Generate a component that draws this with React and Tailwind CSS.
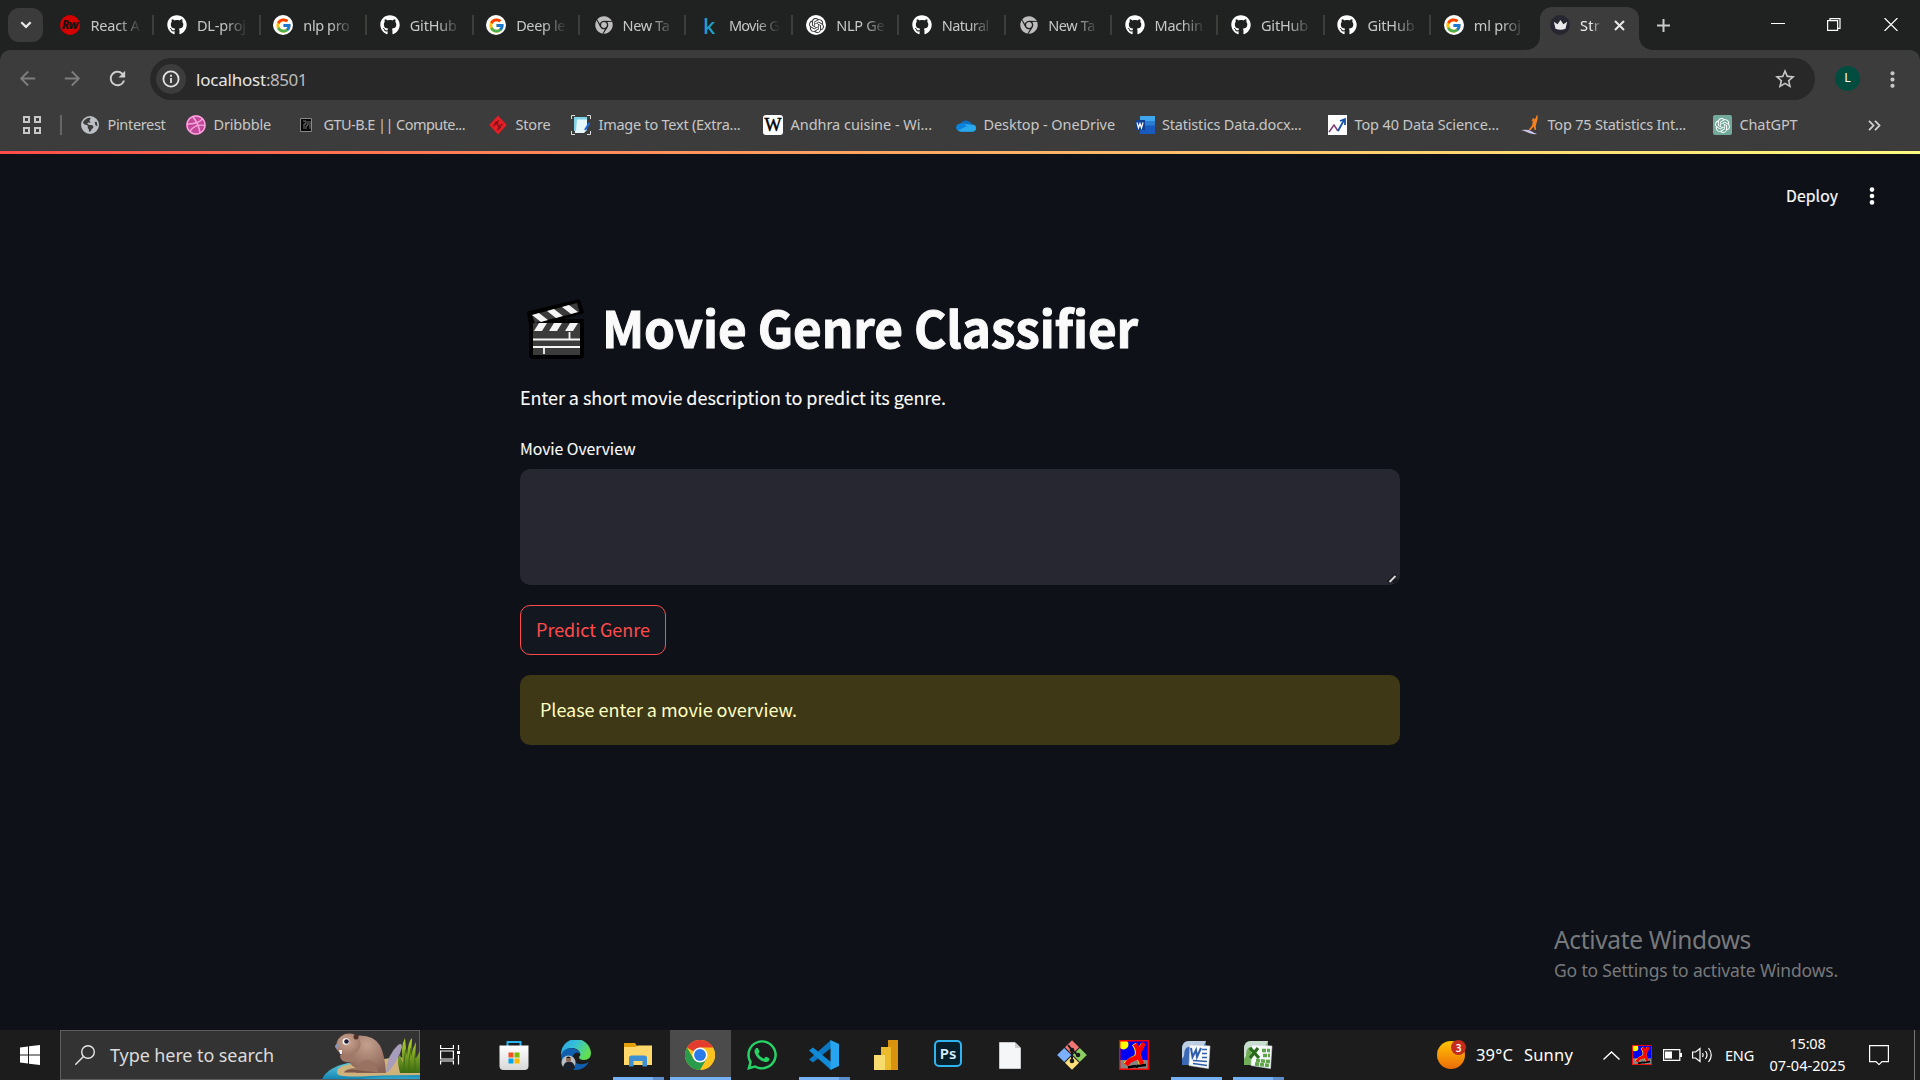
import React, { useLayoutEffect, useRef, useState } from "react";
import { FaGithub, FaChrome, FaDribbble, FaWhatsapp } from "react-icons/fa";
import { FaEarthAmericas } from "react-icons/fa6";
import { FcGoogle } from "react-icons/fc";
import { SiOpenai } from "react-icons/si";
import { MdArrowBack, MdArrowForward, MdRefresh, MdStarBorder, MdMoreVert } from "react-icons/md";

/* Single line of text whose letter spacing is adjusted to fill a given width. */
function Fit({ w, className = "", children }) {
  const ref = useRef(null);
  const [ls, setLs] = useState(0);
  useLayoutEffect(() => {
    const natural = ref.current.getBoundingClientRect().width;
    setLs((w - natural) / children.length);
  }, []);
  return (
    <span ref={ref} className={`inline-block shrink-0 whitespace-pre ${className}`} style={{ letterSpacing: `${ls}px` }}>
      {children}
    </span>
  );
}

const Google = () => (
  <span className="flex size-5 items-center justify-center rounded-full bg-white"><FcGoogle size={17} /></span>
);
const Github = () => <FaGithub size={20} color="#fff" />;
const Chrome = () => <span className="flex size-5 items-center justify-center pl-[2px]"><FaChrome size={18} color="#bdbdbd" /></span>;
const ReactW = () => (
  <span className="-ml-px mr-px flex size-5 items-center justify-center rounded-full bg-[#d40000] text-[12px] font-black italic leading-none tracking-[-1px] text-[#251010]">Rw</span>
);
const Kaggle = () => <span className="w-5 pl-[4px] text-[22px] font-medium leading-[20px] text-[#1f9fd0]">k</span>;
const Openai = () => (
  <span className="ml-px flex size-5 items-center justify-center rounded-full bg-white"><SiOpenai size={15} color="#333" /></span>
);

const TABS = [
  [ReactW, "React A", 49], [Github, "DL-proj", 49], [Google, "nlp pro", 46], [Github, "GitHub", 47],
  [Google, "Deep le", 49], [Chrome, "New Ta", 47], [Kaggle, "Movie G", 50], [Openai, "NLP Ge", 48],
  [Github, "Natural", 47], [Chrome, "New Ta", 47], [Github, "Machin", 48], [Github, "GitHub", 47],
  [Github, "GitHub", 47], [Google, "ml proj", 47],
];

function TabStrip() {
  return (
    <div className="flex h-[50px] bg-[#1f2220] text-[#c7c7c7]">
      <div className="ml-2 mt-2 flex h-[34px] w-[35px] items-center justify-center rounded-[11px] bg-[#3a3b3a]">
        <svg width="12" height="8" viewBox="0 0 12 8" fill="none" stroke="#e8e8e8" strokeWidth="2.2"><path d="M1.3 1.2 6 5.9l4.7-4.7" /></svg>
      </div>
      <div className="ml-[5px] flex w-[1488px] shrink-0">
        {TABS.map(([Icon, text, w], i) => (
          <div key={i} className="flex h-[50px] w-[106.42px] shrink-0 items-center pl-[12.5px]">
            <Icon />
            <div className="ml-[10px] w-[50px] overflow-hidden text-[14.500px] leading-[24px] [mask-image:linear-gradient(90deg,#000_55%,transparent_102%)]">
              <Fit w={w}>{text}</Fit>
            </div>
            <div className={i === 13 ? "" : "ml-auto h-5 w-[2px] bg-[#3c3e3c]"} />
          </div>
        ))}
      </div>
      <div className="-ml-[11px] flex w-[132px] shrink-0 items-end">
        <svg className="shrink-0" width="15" height="14" viewBox="0 0 15 14"><path d="M15 0v14H0C9 14 15 8 15 0Z" fill="#3c3c3c" /></svg>
        <div className="flex h-[43px] w-[99px] shrink-0 items-center rounded-t-[12px] bg-[#3c3c3c] pb-[7px] pl-[10px]">
          <span className="flex size-5 items-center justify-center rounded-full bg-[#262730]">
            <svg width="15" height="10" viewBox="0 0 16 12"><path d="M0 2l4.5 3L8 0l3.500 5L16 2l-2 8.500q-6 2.500-12 0Z" fill="#e9e9ec" /></svg>
          </span>
          <div className="ml-[10px] w-[21px] overflow-hidden text-[14.500px] leading-[24px] text-[#eee] [mask-image:linear-gradient(90deg,#000_50%,transparent_102%)]"><Fit w={20}>Str</Fit></div>
          <svg className="ml-[13px]" width="11" height="11" viewBox="0 0 11 11" stroke="#e8e8e8" strokeWidth="2"><path d="M1 1l9 9M10 1l-9 9" /></svg>
        </div>
        <svg className="shrink-0" width="15" height="14" viewBox="0 0 15 14"><path d="M0 0v14h15C6 14 0 8 0 0Z" fill="#3c3c3c" /></svg>
      </div>
      <svg className="mt-[18.500px]" width="13" height="13" viewBox="0 0 13 13" stroke="#c9c9c9" strokeWidth="2"><path d="M6.500 0v13M0 6.500h13" /></svg>
      <div className="ml-auto mr-[22px] mt-[18px] flex h-[13px]">
        <svg width="14" height="13" stroke="#fff"><path d="M0 5.500h14" /></svg>
        <svg className="ml-[42px]" width="14" height="13" fill="none" stroke="#fff" strokeWidth="1.200"><path d="M.6 2.600h10v9.800H.6ZM3 2.500V.6h10v9.800h-2.300" /></svg>
        <svg className="ml-[43px]" width="14" height="13" stroke="#fff" strokeWidth="1.200"><path d="M.5 0l13 13M13.500 0l-13 13" /></svg>
      </div>
    </div>
  );
}

function Toolbar() {
  return (
    <div className="bg-[#1f2220]">
      <div className="flex h-[50px] items-start rounded-t-[10px] bg-[#3c3c3c] pt-2">
        <div className="flex h-[42px] w-[150px] items-center pb-[1px]">
          <MdArrowBack className="ml-[16px]" size={23} color="#7d7d7d" />
          <MdArrowForward className="ml-[22px]" size={23} color="#7d7d7d" />
          <MdRefresh className="ml-[22px]" size={23} color="#cfcfcf" />
        </div>
        <div className="flex h-[42px] w-[1665px] items-center rounded-full bg-[#282828]">
          <span className="ml-[6px] flex size-[30px] items-center justify-center rounded-full bg-[#3c3c3c]">
            <svg width="18" height="18" viewBox="0 0 18 18" fill="none" stroke="#e3e3e3" strokeWidth="1.800"><circle cx="9" cy="9" r="7.600" /><path d="M9 8v5M9 4.800v1.900" /></svg>
          </span>
          <div className="ml-[10px] mt-px flex text-[17px] leading-[42px] text-[#e6e6e6]"><Fit w={70}>localhost</Fit><Fit w={41} className="text-[#bdbdbd]">:8501</Fit></div>
          <MdStarBorder className="ml-auto mr-[18px]" size={24} color="#c7c7c7" />
        </div>
        <div className="ml-5 mt-2 flex size-[25px] items-center justify-center rounded-full bg-[#004d40] text-[12.500px] text-white">L</div>
        <MdMoreVert className="ml-[20px] mt-[8.500px]" size={25} color="#c7c7c7" />
      </div>
    </div>
  );
}

const BM = [
  ["w-[106px]", "Pinterest", 58, <FaEarthAmericas size={18} color="#bcc0c4" />],
  ["w-[110px]", "Dribbble", 57.5, <span className="flex size-5 items-center justify-center rounded-full bg-[#c2489a]"><FaDribbble size={20} color="#f7a6dc" /></span>],
  ["w-[192px]", "GTU-B.E || Compute...", 141.5, <svg width="12" height="14"><path d="M.5.500h11v13H.5Z" fill="#050505" stroke="#888" /><path d="M3 3h3v3H4v5M8 3v4l-2 1v3M10 3v8" stroke="#777" fill="none" /></svg>],
  ["w-[83px]", "Store", 35, <svg width="20" height="20" viewBox="0 0 20 20"><path d="M10 .5 18.800 10 10 19.500 1.200 10Z" fill="#e41e26" /><path d="M6.500 8.500 11 5.500M5 11l4.500-3 1 4 4-3M9 15l4-3" stroke="#7c1216" strokeWidth="1.200" fill="none" /></svg>],
  ["w-[192px]", "Image to Text (Extra...", 142, <svg width="20" height="20" viewBox="0 0 20 20"><path d="M.5 4V.5H4M16 .5h3.500V4M.5 16v3.500H4M16 19.500h3.500V16" stroke="#ddd" fill="none" /><path d="M3 3h13v12l-3 3H4Z" fill="#e6f7fb" /><path d="M3 2h13v2.500H6L5 16H3Z" fill="#7fd3e6" /><path d="M18.500 8 14 15" stroke="#2367d8" strokeWidth="2.200" /></svg>],
  ["w-[193px]", "Andhra cuisine - Wi...", 141.5, <span className="flex size-5 items-center justify-center overflow-hidden rounded-[3px] bg-white font-['Liberation_Serif',serif] text-[18px] leading-none text-black"><span className="[-webkit-text-stroke:0.5px_#000]">W</span></span>],
  ["w-[178.5px]", "Desktop - OneDrive", 131.5, <svg width="20" height="13" viewBox="0 0 20 13"><path d="M5 12.500a4.500 4.500 0 0 1-.5-8A6.500 6.500 0 0 1 16 5.500q4 .8 4 4t-3 3Z" fill="#0f6cbd" /><path d="M7 4.500 18.500 6q2 1.500 1.500 4-.8 2.800-3.500 2.800H4.500q-2.500-.3-3.500-2.800L9 6Z" fill="#28a8ea" /><path d="M0 9q0-4 4.500-4.600Q8 4 11 7L2 11.500Q.4 10.500 0 9Z" fill="#0a84dc" /></svg>],
  ["w-[192.5px]", "Statistics Data.docx...", 139.5, <svg width="20" height="18" viewBox="0 0 20 18"><path d="M5 0h15v18H5Z" fill="#185abd" /><path d="M5 0h15v5H5Z" fill="#41a5ee" /><path d="M5 5h15v4.500H5Z" fill="#2b7cd3" /><path d="M0 4h10v10H0Z" fill="#123f92" /><path d="M2 6.500 3.500 12 5 7.500 6.500 12 8 6.500" stroke="#fff" strokeWidth="1.200" fill="none" /></svg>],
  ["w-[193px]", "Top 40 Data Science...", 144.5, <svg width="19" height="20" viewBox="0 0 19 20"><path d="M0 0h19v20H0Z" fill="#fff" /><path d="M1 17 6 10l4 6" stroke="#7b3b76" strokeWidth="1.500" fill="none" /><path d="M10 16 16 5M12 6l5-2v6" stroke="#1753a6" strokeWidth="1.800" fill="none" /></svg>],
  ["w-[192px]", "Top 75 Statistics Int...", 138.5, <svg width="20" height="20" viewBox="0 0 20 20"><path d="M16.500.5h1.200q.3 4-1 7l-1 3 .3 4.500h-1.300l-1-3.500-3 3.500H8.500l3.500-4.500.8-4-1.800-1.500 3 .5q2-2 2.500-5Z" fill="#f58220" /><circle cx="13.500" cy="4.500" r="1.200" fill="#f58220" /><path d="M1 15q7-1 10 1t6 3q-5 .5-8-1t-8-3Z" fill="#cbc4e8" /></svg>],
  ["w-[100px]", "ChatGPT", 58, <span className="flex h-5 w-[19px] items-center justify-center rounded-[2px] bg-[#74aa9c]"><SiOpenai size={15} color="#fff" /></span>],
];

function Bookmarks() {
  return (
    <div className="flex h-[51px] items-start bg-[#3c3c3c] pt-[9px] text-[14.500px] text-[#c7c7c7]">
      <div className="flex h-8 w-20 shrink-0 items-center">
        <svg className="ml-[23px]" width="18" height="18" fill="none" stroke="#c7c7c7" strokeWidth="2"><path d="M1 1h5v5H1ZM12 1h5v5h-5ZM1 12h5v5H1ZM12 12h5v5h-5Z" /></svg>
        <div className="ml-[19px] h-5 w-[2px] bg-[#666]" />
      </div>
      {BM.map(([cls, text, w, icon], i) => (
        <div key={i} className={`flex h-8 shrink-0 items-center ${cls}`}>
          <span className="mr-[7.500px] flex w-5 shrink-0 items-center justify-center">{icon}</span>
          <Fit w={w} className="pb-[2px] leading-[30px]">{text}</Fit>
        </div>
      ))}
      <svg className="ml-auto mr-[39px] mt-[11px]" width="13" height="11" fill="none" stroke="#d0d0d0" strokeWidth="1.800"><path d="M1 .8 5.500 5.500 1 10.200M7 .8l4.500 4.700L7 10.200" /></svg>
    </div>
  );
}

function Clapper() {
  return (
    <svg width="58" height="61" viewBox="0 0 58 61">
      <path d="M0 14Q0 12 2 12L51 .5q2-.5 2.500 1.500l3.500 12L37 20h18q2 0 2 2v33q0 5-5 5H7q-5 0-5-5V25Z" fill="#000" />
      <path d="M5 16 50 4l2.500 9L8 24Z" fill="#3b3b3b" />
      <path d="M5 16l7-2 9 7-7 2ZM20 12l7-2 9 7-7 2ZM35 8l7-2 9 7-7 2Z" fill="#f4f4f4" />
      <path d="M6 24h47v32H6Z" fill="#3b3b3b" />
      <path d="M12 24h8l-5 8H7ZM27 24h8l-5 8h-8ZM43 24h8l-5 8h-8Z" fill="#f4f4f4" />
      <path d="M6 40.500h47M6 48h47M42.500 33v7M17 48v7" stroke="#f4f4f4" strokeWidth="1.800" />
    </svg>
  );
}

function StreamlitPage() {
  return (
    <div className="flex h-[876px] flex-col bg-[#0e1117] font-['Noto_Sans_CJK_SC',sans-serif] text-[#fafafa]">
      <div className="flex h-[75px] items-center pl-[1786px] pt-[9px]">
        <Fit w={52} className="text-[15.750px] leading-6 [-webkit-text-stroke:0.2px_#fafafa]">Deploy</Fit>
        <svg className="ml-[31px]" width="6" height="18" fill="#fafafa"><circle cx="3" cy="2.600" r="2.300" /><circle cx="3" cy="9" r="2.300" /><circle cx="3" cy="15.400" r="2.300" /></svg>
      </div>
      <div className="mx-auto flex w-[880px] flex-col pt-[70px]">
        <div className="flex h-[62px] pl-[7px]">
          <Clapper />
          <Fit w={536} className="ml-[17px] text-[49.500px] font-bold leading-[56px] [-webkit-text-stroke:1px_#fafafa]">Movie Genre Classifier</Fit>
        </div>
        <div className="mt-[24px] h-6 text-[18px] leading-6 [-webkit-text-stroke:0.1px_#fafafa]"><Fit w={426}>Enter a short movie description to predict its genre.</Fit></div>
        <div className="mt-[30px] h-5 text-[15.750px] leading-5 [-webkit-text-stroke:0.1px_#fafafa]"><Fit w={115.5}>Movie Overview</Fit></div>
        <div className="mt-[10px] flex h-[116px] items-end justify-end rounded-[10px] bg-[#262730] p-[1px] pr-[2px]">
          <svg width="11" height="11" viewBox="0 0 11 11" fill="none"><path d="M1.500 9.500 9 2M6 9.500 9.500 6" stroke="#15161c" strokeWidth="3.500" /><path d="M2.500 9 8.500 3" stroke="#d8d8d8" strokeWidth="2" /></svg>
        </div>
        <div className="mt-5 flex h-[50px] w-[146px] items-center rounded-[10px] border border-[#ff4b4b] bg-[#131720] pb-[3px] pl-[15px] text-[18px] text-[#ff4b4b]">
          <Fit w={114} className="leading-6">Predict Genre</Fit>
        </div>
        <div className="mt-5 flex h-[70px] items-center rounded-[10px] bg-[#3e3816] pb-[3px] pl-5 text-[18px] text-[#ffffc2]">
          <Fit w={257} className="leading-6">Please enter a movie overview.</Fit>
        </div>
      </div>
      <div className="ml-[1554px] mt-auto h-[107px] font-['Noto_Sans',sans-serif] text-[#77797c]">
        <Fit w={197} className="block text-[24.500px] leading-[34px]">Activate Windows</Fit>
        <Fit w={284} className="block text-[17.500px] leading-[26px]">Go to Settings to activate Windows.</Fit>
      </div>
    </div>
  );
}

const Beaver = () => (
  <svg width="98" height="48" viewBox="0 0 98 48">
    <defs>
      <radialGradient id="fur" cx=".5" cy=".25" r=".75"><stop offset="0" stopColor="#c4a08e" /><stop offset="1" stopColor="#8b6456" /></radialGradient>
      <radialGradient id="face" cx=".45" cy=".4" r=".65"><stop offset="0" stopColor="#cda793" /><stop offset="1" stopColor="#9c7363" /></radialGradient>
      <linearGradient id="water" x1="0" y1="0" x2="0" y2="1"><stop offset="0" stopColor="#5fc8dc" /><stop offset="1" stopColor="#1286b4" /></linearGradient>
      <linearGradient id="grass" x1="0" y1="0" x2="0" y2="1"><stop offset="0" stopColor="#b7d433" /><stop offset="1" stopColor="#3c6b12" /></linearGradient>
    </defs>
    <path d="M0 48Q6 36 26 32L98 36v12Z" fill="url(#water)" />
    <path d="M15 42q-1-8 18-9l35-6q20-2 30 1v16q-28 0-50 1-33 2-33-3Z" fill="#d0b37c" />
    <path d="M40 48q24-4 58-2v2Z" fill="#2b9fc4" />
    <path d="M64 41q1-17 12-27 4-3 4 2-3 13-14 25Z" fill="#a79dbb" />
    <path d="M26 24Q24 6 38 4.500q14 0 20 10 5 10 6 27.500H34q1-3 0-5-8-3-8-13Z" fill="url(#fur)" />
    <path d="M18 24q0 6 6 7 6 1 9-2l-2-5-7-3Z" fill="#a07868" />
    <path d="M14 15q1-9 9-12 9-2 14 4 4 8-2 14-7 5-14 2-7-2-7-8Z" fill="url(#face)" />
    <path d="M13 15q1-3 4-2l-1 5q-3 0-3-3Z" fill="#8d94b8" />
    <path d="M17 19h3v4h-2Z" fill="#f0eef5" />
    <circle cx="24" cy="10.500" r="3.300" fill="#fff" /><circle cx="24.500" cy="10.500" r="2.300" fill="#251b38" />
    <circle cx="34" cy="6" r="2.500" fill="#4c3029" />
    <path d="M22 41q3-4 13-4 4-8 11-8 9 1 10 12.500Z" fill="#9a7262" />
    <path d="M22 41.500q2-3 8-3l26 3Z" fill="#7a5548" />
    <path d="M78 42q-4-15 0-18l3 8q-3-16 2-25 1 11 2 18 1-15 5-18l-1 19q1-8 5-15l-1 18 5-9v22Z" fill="url(#grass)" />
    <path d="M82 42q0-16 2-24M87 42q-1-14 2-25M93 42V24" stroke="#416e12" fill="none" />
  </svg>
);

const Runner = ({ size }) => (
  <svg width={size} height={size} viewBox="0 0 30 30">
    <path d="M0 0h30v30H0Z" fill="#0000f5" /><path d="M0 20h30v10H0Z" fill="#858585" /><circle cx="4.500" cy="4.500" r="5" fill="#ff0" />
    <path d="M9 27.500l7-1.500 3 1M18 26l9-1" stroke="#000" strokeWidth="2.500" />
    <path d="M15 4q4 6 3 11-1 3-5 4l-7 5M24 4l-5 9 3 11" stroke="#ff0" strokeWidth="4.500" fill="none" />
    <path d="M16 4q4 6 3 11-1 3-5 4-4 1-7 6M25 3l-6 11 4 10" stroke="#f00" strokeWidth="4.500" fill="none" />
    <path d="M.7.7h28.600v28.600H.7Z" stroke="#f00" strokeWidth="1.400" fill="none" />
  </svg>
);

const ChromeColor = () => (
  <svg width="30" height="30" viewBox="0 0 48 48">
    <circle cx="24" cy="24" r="24" fill="#fcc31e" />
    <path d="M24 24 3.200 12A24 24 0 0 1 44.800 12Z" fill="#e33b2e" />
    <path d="M24 12h20.800A24 24 0 0 1 24 48l10.400-18Z" fill="#fcc31e" />
    <path d="M3.200 12 13.600 30 34.400 30 24 48A24 24 0 0 1 3.200 12Z" fill="#2a9b4b" />
    <circle cx="24" cy="24" r="12" fill="#fff" /><circle cx="24" cy="24" r="9.500" fill="#2b7ae9" />
  </svg>
);

const Office = ({ c, d, excel }) => (
  <svg width="30" height="30" viewBox="0 0 30 30">
    <path d="M8 1h17v24H1V9Q1 1 8 1Z" fill={c} /><path d="M8 1h17l-3 6H7q-4 1-4 9l-2 3V9Q1 1 8 1Z" fill="#dfe7ee" opacity=".8" />
    <path d="M9 5 29 6l-1.500 22.500L8 25.500Z" fill="#f7f9fb" stroke="#cfd5dc" strokeWidth=".6" />
    {excel ? (
      <>
        <path d="M19 10.500h8M20 15.500h7M13 20.500l14 1M12 24l14 1.500" stroke={d} strokeWidth="3.500" strokeDasharray="4 1" />
        <path d="M7 8l9 10M15 8 7 18" stroke="#2a6a1c" strokeWidth="3.200" />
      </>
    ) : (
      <>
        <path d="M21 9.500h5M21 13.500h5M21 17.500h5M12 20.500l14 1M12 23.500l14 2" stroke={d} strokeWidth="1.600" />
        <path d="M10 8l1.500 9 3.500-7 1 7 4-9" stroke={d} strokeWidth="2" fill="none" />
      </>
    )}
  </svg>
);

const APPS = [
  { icon: <svg width="30" height="30" viewBox="0 0 30 30"><defs><linearGradient id="bag" x1="0" y1="0" x2="0" y2="1"><stop offset="0" stopColor="#fff" /><stop offset="1" stopColor="#d8d8d8" /></linearGradient></defs><path d="M8.500 6V2h13v4" stroke="#2bb4ee" strokeWidth="2" fill="none" /><path d="M.5 5.500h29V26q0 4-4 4h-21q-4 0-4-4Z" fill="url(#bag)" /><path d="M9.500 12.500h5v5h-5Z" fill="#f25022" /><path d="M15.500 12.500h5v5h-5Z" fill="#7fba00" /><path d="M9.500 18.500h5v5h-5Z" fill="#00a4ef" /><path d="M15.500 18.500h5v5h-5Z" fill="#ffb900" /></svg> },
  { icon: <svg width="30" height="30" viewBox="0 0 30 30"><defs><linearGradient id="edge" x1="0" y1="0" x2="1" y2="0.400"><stop offset="0" stopColor="#2a9fe5" /><stop offset=".5" stopColor="#35c1d8" /><stop offset="1" stopColor="#62de52" /></linearGradient></defs><path d="M0 15A15 15 0 0 1 30 13q0 7-7 7-5 0-5-3 2-1 1-4-2-5-9-5Q3 9 0 15Z" fill="url(#edge)" /><path d="M0 15Q3 8 10 8q8 1 9 6-3-3-6 0-4 5 2 9 6 3 13-1-5 8-13 8Q1 29 0 15Z" fill="#0f5fae" /><circle cx="7.500" cy="22.500" r="7" fill="#b9bec2" /><path d="M2 27.500q1-6 6-6t6 6a7 7 0 0 1-12 0Z" fill="#1a1f2a" /><circle cx="7.500" cy="19.500" r="2.500" fill="#8d6752" /><path d="M5 18q2-3 5 0Z" fill="#111" /></svg> },
  { icon: <svg width="28" height="24" viewBox="0 0 28 24"><path d="M0 0h11l2 3v7H0Z" fill="#e3a008" /><path d="M0 4h11l3-1.500h14V22H0Z" fill="#ffd76a" /><path d="M5 23.500V15q0-2.500 2.500-2.500h13Q23 12.500 23 15v8.500h-4.500V18h-9v5.500Z" fill="#3d90d4" /></svg>, line: "split" },
  { icon: <ChromeColor />, line: "full", active: true },
  { icon: <FaWhatsapp size={34} color="#25d366" /> },
  { icon: <svg width="30" height="30" viewBox="0 0 30 30"><path d="M22 0v8L4 22.500 0 19.500Z" fill="#0a78c2" /><path d="M22 30v-8L4 7.500 0 10.500Z" fill="#118bd6" /><path d="M21.500 0 30 4v22l-8.500 4Z" fill="#27a4ef" /></svg>, line: "split" },
  { icon: <svg width="24" height="30" viewBox="0 0 24 30"><path d="M14 0h10v30H14Z" fill="#d8940f" /><path d="M7 7h10v23H7Z" fill="#ecbb2b" /><path d="M0 15h11v15H0Z" fill="#f7dc6d" /></svg> },
  { icon: <span className="mb-[3px] flex h-[27px] w-[28px] items-center justify-center rounded-[5px] border-2 border-[#2fb4f0] bg-[#071e2b] text-[15px] font-semibold leading-none text-[#d8f1ff]">Ps</span> },
  { icon: <svg width="22" height="27" viewBox="0 0 22 27"><path d="M.5.500H16l5.500 5.500v20.500H.5Z" fill="#f4f6f7" stroke="#c8c8c8" /><path d="M16 .5V6h5.500Z" fill="#c9cdd0" /></svg> },
  { icon: <svg width="30" height="30" viewBox="0 0 30 30"><g transform="rotate(45 15 15)"><path d="M4.500 4.500h10v10h-10Z" fill="#f07575" /><path d="M15.500 4.500h10v10h-10Z" fill="#8ccf60" /><path d="M4.500 15.500h10v10h-10Z" fill="#7bb0ff" /><path d="M15.500 15.500h10v10h-10Z" fill="#fde07c" /></g><path d="M11 5l4 5v10M15 10l6 5" stroke="#1a1a1a" strokeWidth="2" fill="none" /><circle cx="15" cy="10" r="2.300" fill="#1a1a1a" /><circle cx="15" cy="21" r="2.300" fill="#1a1a1a" /><circle cx="21" cy="15" r="2.300" fill="#1a1a1a" /></svg> },
  { icon: <Runner size={30} /> },
  { icon: <Office c="#3a69b5" d="#2f5da9" />, line: "one" },
  { icon: <Office c="#6fae57" d="#5da548" excel />, line: "split" },
];

function Taskbar() {
  return (
    <div className="flex h-[50px] bg-[#1c1c1c] text-white">
      <div className="flex w-[60px] items-center pl-5">
        <svg width="20" height="20" viewBox="0 0 20 20" fill="#fff"><path d="M0 2.500 8 1.400v8.100H0ZM9 1.200 20 0v9.500H9ZM0 10.500h8v8.100l-8-1ZM9 10.500h11V20L9 18.700Z" /></svg>
      </div>
      <div className="flex w-[360px] items-center border border-[#5d5d5d] bg-[#333] pl-[14px]">
        <svg width="20" height="20" viewBox="0 0 20 20" fill="none" stroke="#e8e8e8" strokeWidth="1.400"><circle cx="13" cy="7" r="6.300" /><path d="M8.500 11.500.3 19.700" /></svg>
        <Fit w={164} className="ml-[15px] text-[18px] leading-[48px] text-[#dcdcdc]">Type here to search</Fit>
        <div className="-mr-px ml-auto"><Beaver /></div>
      </div>
      <div className="flex w-[63.5px] items-center pl-5">
        <svg width="20" height="20" viewBox="0 0 20 20" fill="none" stroke="#fff" strokeWidth="1.200"><path d="M.6 0v3.500h12.800V0M.6 6h12.800v8H.6ZM.6 19.500V16h12.800v3.500M18.500 0v5M18.500 10v9.500" /><path d="M17 6h3v3h-3Z" fill="#fff" stroke="none" /></svg>
      </div>
      {APPS.map(({ icon, line, active }, i) => (
        <div key={i} className={`mr-px flex w-[61px] flex-col items-center ${active ? "bg-[#4b4b4b]" : ""}`}>
          <div className="flex h-[47px] items-center justify-center pt-[3px]">{icon}</div>
          {line === "full" && <div className="h-[3px] w-full bg-[#76b1f5]" />}
          {line === "one" && <div className="h-[3px] w-[51px] bg-[#76b1f5]" />}
          {line === "split" && <div className="flex h-[3px] w-[51px]"><div className="w-10 bg-[#76b1f5]" /><div className="w-[11px] bg-[#5d8dc8]" /></div>}
        </div>
      ))}
      <div className="ml-auto flex h-[50px] w-[483px] items-center">
        <div className="relative size-[28px] rounded-full bg-linear-to-b from-[#ffc400] to-[#ea6a08]">
          <span className="absolute -right-px -top-px flex size-[15px] items-center justify-center rounded-full bg-[#c42b1c] text-[10px] font-semibold leading-none">3</span>
        </div>
        <Fit w={37} className="ml-[11px] pt-px text-[16.500px]">39°C</Fit>
        <Fit w={49} className="ml-[11px] pt-px text-[16.500px]">Sunny</Fit>
        <svg className="ml-[30px]" width="17" height="9" fill="none" stroke="#fff" strokeWidth="1.400"><path d="M.5 8.500l8-7.500 8 7.500" /></svg>
        <div className="ml-[12px]"><Runner size={20} /></div>
        <svg className="ml-[11px]" width="19" height="12" fill="none" stroke="#fff" strokeWidth="1.200"><path d="M.6.600h16.200v10.800H.6Z" /><path d="M2 2.500h7v7H2ZM17 4h2v4h-2Z" fill="#fff" stroke="none" /></svg>
        <svg className="ml-[10px]" width="21" height="18" viewBox="0 0 21 18" fill="none" stroke="#fff" strokeWidth="1.200"><path d="M.6 6h3L8 2.500v13L3.600 12h-3ZM10.500 7q1.200 2 0 4M13.500 5q3 4 0 8M16.500 2q5.500 7 0 14" /></svg>
        <Fit w={29} className="ml-3 pt-px text-[14.500px]">ENG</Fit>
        <div className="ml-[15px] flex w-[77px] flex-col items-center pb-[2px] text-[14.500px] leading-[22px]">
          <Fit w={36}>15:08</Fit>
          <Fit w={76}>07-04-2025</Fit>
        </div>
        <svg className="ml-[23px]" width="20" height="20" fill="none" stroke="#fff" strokeWidth="1.200"><path d="M.6.600h18.800v16H13l-3 3-3-3H.6Z" /></svg>
        <div className="ml-auto mr-[5px] h-full w-px bg-[#777]" />
      </div>
    </div>
  );
}

export default function App() {
  return (
    <div className="flex h-[1080px] w-[1920px] flex-col overflow-hidden bg-[#0e1117] font-['Noto_Sans',sans-serif]">
      <TabStrip />
      <Toolbar />
      <Bookmarks />
      <div className="h-[3px] shrink-0 bg-linear-to-r from-[#ff4b4b] to-[#fffd80]" />
      <StreamlitPage />
      <Taskbar />
    </div>
  );
}
